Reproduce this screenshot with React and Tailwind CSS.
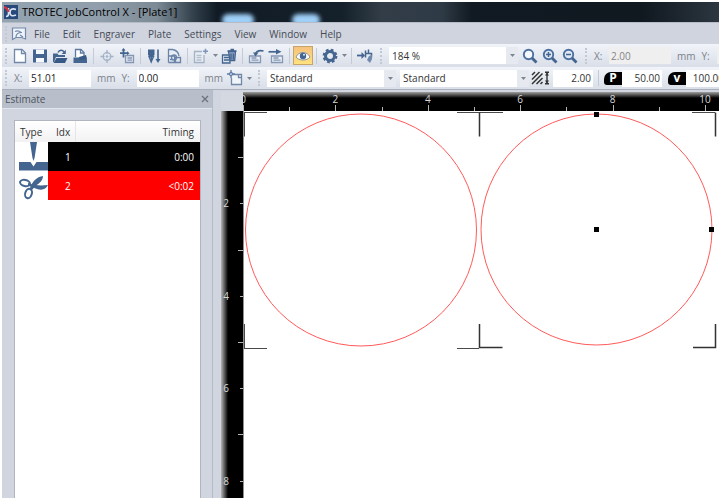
import React, { useEffect, useRef, useState } from 'react';

const MENU = ['File', 'Edit', 'Engraver', 'Plate', 'Settings', 'View', 'Window', 'Help'];
const UNIT = 46.2; // pixels per ruler unit at the current zoom
const BLUE = '#44658f';

const JOBS = [
  { idx: 1, timing: '0:00', row: 'bg-black', type: 'engrave' },
  { idx: 2, timing: '<0:02', row: 'bg-[#fe0000]', type: 'cut' },
];

function Icon({ children, className = 'w-4 h-4' }) {
  return (
    <svg viewBox="0 0 16 16" className={className} fill="none" stroke={BLUE} strokeWidth="1.3" aria-hidden="true">
      {children}
    </svg>
  );
}

const icons = {
  new: (
    <Icon>
      <path d="M2.5 1.5h7.5l3.5 3.5v9.5h-11z" fill="#fdfeff" stroke="#7288a8" />
      <path d="M9.5 1.5v4h4" stroke="#7288a8" />
    </Icon>
  ),
  save: (
    <Icon>
      <path d="M1 1.5h14v13H1z" fill={BLUE} stroke="none" />
      <path d="M4 1.5h8v4.500H4z" fill="#f6f9fc" stroke="none" />
      <path d="M4 10h8v4.500H4z" fill="#f6f9fc" stroke="none" />
    </Icon>
  ),
  open: (
    <Icon>
      <path d="M1 5.500h4.500l1 1.500H13v2H4l-2 5H1z" fill={BLUE} stroke="none" />
      <path d="M4.500 10H15.500l-2.500 5H1.500z" fill="#375985" stroke="none" />
      <path d="M6 4.500C7.500 1.500 10.500 1.500 12 4" strokeWidth="1.500" />
      <path d="M13.800 1.800v4.200H9.600z" fill={BLUE} stroke="none" />
    </Icon>
  ),
  print: (
    <Icon>
      <path d="M3.500 9V1.500h5.500L12 4.500V9" fill="#fdfeff" stroke="#5f7a9f" />
      <path d="M8.500 1.500v3.500H12" stroke="#5f7a9f" />
      <path d="M1.500 9.500h11l2.500 2v3.500h-13.500z" fill={BLUE} stroke="none" />
      <path d="M7 9l7-2 1 4-7 1z" fill="#375985" stroke="none" />
    </Icon>
  ),
  position: (
    <Icon>
      <circle cx="8" cy="8.500" r="3.800" stroke="#a2b2c9" />
      <circle cx="8" cy="8.500" r="1.300" fill="#a2b2c9" stroke="none" />
      <path d="M8 2v4M8 11v4M1.500 8.500h4M10.500 8.500h4" stroke="#a2b2c9" />
    </Icon>
  ),
  moveTo: (
    <Icon>
      <path d="M6.500 7.500h8v7h-8z" fill="#dfe6f0" stroke="#8597b3" />
      <path d="M8.500 10h4.500M8.500 12.200h4.500" stroke="#8597b3" />
      <path d="M4.500 1.500v8M1 5.200h8" strokeWidth="1.800" />
      <path d="M4.500 0l2 2.500h-4zM10.500 5.200L8 3.200v4z" fill={BLUE} stroke="none" />
    </Icon>
  ),
  engrave: (
    <Icon>
      <path d="M2 1.500h6.500v5l-1 1.500H3L2 6.500z" fill={BLUE} stroke="none" />
      <path d="M3 8.500h4.500L5.200 14z" fill="#f7f9fc" strokeWidth="1.400" />
      <path d="M5.200 8v4M12 1.500v11" strokeWidth="1.600" />
      <path d="M9.500 11h5L12 15z" fill={BLUE} stroke="none" />
    </Icon>
  ),
  estimate: (
    <Icon>
      <path d="M2.500 14.500v-13h4c4 .6 6 3 6.500 6.500" fill="#e9eef5" stroke="#6a84a9" />
      <path d="M2.500 8h6v6.500M4 11.500h3M2.500 14.500h12v-5h-5v5" stroke="#6a84a9" />
      <circle cx="8" cy="9.500" r="2.500" stroke="#6a84a9" />
    </Icon>
  ),
  addJob: (
    <Icon>
      <path d="M9 3.500H1.500v11h9.500V7" fill="#e9eef5" stroke="#a5b2c6" />
      <path d="M3.500 7.500h5M3.500 9.700h5M3.500 12h5" stroke="#b4bfd0" />
      <path d="M12.500.8v5M10 3.300h5" stroke="#7f97b9" strokeWidth="1.500" />
    </Icon>
  ),
  removeJob: (
    <Icon>
      <path d="M1.500 7h7.500v8H1.500z" fill="#dce4ef" />
      <path d="M3 9.500h5M3 12h5" />
      <path d="M7.500 3.500h7l-.8 9H9z" fill="#8ea5c5" />
      <path d="M6.500 3h9M9.500 1.500h3.500M10 5.500v6M12.300 5.500v6" strokeWidth="1.400" />
    </Icon>
  ),
  jobBack: (
    <Icon>
      <path d="M1.500 8h11v6.500h-11z" fill="#e9eef5" stroke="#8598b5" />
      <path d="M3.500 10h5M3.500 12.200h7" stroke="#8598b5" />
      <path d="M7.500 6C8.500 3 11 2 15.500 3" strokeWidth="1.700" />
      <path d="M5 4.500h5.500L7.500 8.500z" fill={BLUE} stroke="none" />
    </Icon>
  ),
  jobNext: (
    <Icon>
      <path d="M3.500 8h11v6.500h-11z" fill="#e9eef5" stroke="#8598b5" />
      <path d="M5.500 10h5M5.500 12.200h7" stroke="#8598b5" />
      <path d="M.5 3.800h8" strokeWidth="1.700" />
      <path d="M8 1l5.500 2.800L8 6.600z" fill={BLUE} stroke="none" />
    </Icon>
  ),
  preview: (
    <Icon>
      <path d="M1 9C3.500 3 12.500 3 15 9 12.500 13 3.500 13 1 9z" fill="#fdfdfb" stroke="#8d95a0" strokeWidth="1" />
      <circle cx="8" cy="8" r="3.200" fill={BLUE} stroke="none" />
      <circle cx="9" cy="6.800" r="1" fill="#dfe9f6" stroke="none" />
    </Icon>
  ),
  gear: (
    <Icon>
      <circle cx="8" cy="8" r="6.300" strokeWidth="2.200" strokeDasharray="2.700 2.250" />
      <circle cx="8" cy="8" r="4.500" strokeWidth="3" />
    </Icon>
  ),
  connect: (
    <Icon>
      <path d="M0 7.500h5.500" strokeWidth="1.800" />
      <path d="M4.500 4l3.500 3.500L4.500 11z" fill={BLUE} stroke="none" />
      <path d="M8.500 2.500v7M11.500 1.500v4M9 5.500h5.500v3c0 2-1 3-3 3" strokeWidth="1.500" />
      <path d="M12 8l3-1v4l-2 4-3-3z" fill="#7189ad" stroke="none" />
    </Icon>
  ),
  zoom: (
    <Icon>
      <circle cx="6.500" cy="6.500" r="4.700" fill="#f4f8fc" stroke="#4d70a1" strokeWidth="1.900" />
      <path d="M10 10l4.500 4.500" strokeWidth="2.800" />
    </Icon>
  ),
  zoomIn: (
    <Icon>
      <circle cx="6.500" cy="6.500" r="4.700" fill="#dfe8f3" stroke="#4d70a1" strokeWidth="1.900" />
      <path d="M10 10l4.500 4.500" strokeWidth="2.800" />
      <path d="M6.500 4v5M4 6.500h5" strokeWidth="1.500" />
    </Icon>
  ),
  zoomOut: (
    <Icon>
      <circle cx="6.500" cy="6.500" r="4.700" fill="#dfe8f3" stroke="#4d70a1" strokeWidth="1.900" />
      <path d="M10 10l4.500 4.500" strokeWidth="2.800" />
      <path d="M4 6.500h5" strokeWidth="1.500" />
    </Icon>
  ),
  anchor: (
    <Icon>
      <path d="M6 4.500h8.500v10H4.500V8" fill="#f1f4f9" stroke="#7288a8" />
      <path d="M11.500 4.500v3h3" stroke="#7288a8" />
      <path d="M4 0v8M0 4h8" stroke="#5f7ca6" />
      <circle cx="4" cy="4" r="1.500" fill="#f1f4f9" stroke="#5f7ca6" />
    </Icon>
  ),
};

function Grip() {
  return (
    <span className="w-2 shrink-0 flex justify-center">
      <span className="h-4 border-l-2 border-dotted border-[#c3c9d4]" />
    </span>
  );
}

function Separator() {
  return (
    <span className="w-[7px] shrink-0 flex justify-center">
      <span className="h-4 w-px bg-[#c4cad6]" />
    </span>
  );
}

function Tool({ icon, label, active }) {
  return (
    <button
      type="button"
      aria-label={label}
      className={
        active
          ? 'w-5 h-[19px] shrink-0 flex items-center justify-center border border-[#c8a469] bg-gradient-to-b from-[#f6c27c] to-[#ffe27d]'
          : 'w-5 h-5 shrink-0 flex items-center justify-center'
      }
    >
      {icons[icon]}
    </button>
  );
}

function Caret() {
  return (
    <svg viewBox="0 0 5 3" className="w-[5px] h-[3px]" aria-hidden="true">
      <path d="M0 0h5L2.500 3z" fill="#7d8593" />
    </svg>
  );
}

function MenuCaret({ label }) {
  return (
    <button type="button" aria-label={label} className="w-2 h-5 shrink-0 flex items-center justify-center">
      <Caret />
    </button>
  );
}

function Combo({ label, value }) {
  return (
    <div className="relative w-[129px] h-[17px] shrink-0">
      <select aria-label={label} defaultValue={value} className="appearance-none w-full h-full pl-[3px] bg-white text-[#333]">
        <option>{value}</option>
      </select>
      <span className="absolute right-0 inset-y-0 w-3 flex items-center justify-center bg-[#e6eaf0] pointer-events-none">
        <Caret />
      </span>
    </div>
  );
}

function Coordinate({ axis, value, disabled }) {
  return (
    <label className="flex items-center shrink-0 text-[#7c818b]">
      <span className="w-[15px]">{axis}:</span>
      <input
        defaultValue={value}
        disabled={disabled}
        className="w-[62px] h-[17px] px-0.5 bg-white text-[#222] disabled:bg-[#efeff0] disabled:text-[#858585]"
      />
      <span className="pl-1.5">mm</span>
    </label>
  );
}

function LaserField({ label, badge, value }) {
  return (
    <label className="flex items-center shrink-0">
      {badge}
      <input aria-label={label} defaultValue={value} className="w-10 h-[17px] px-0.5 text-right bg-white text-[#333]" />
    </label>
  );
}

function Badge({ children }) {
  return (
    <span className="w-[18px] h-[13px] flex items-center justify-center bg-black text-white text-xs leading-none font-bold rounded-tl-[7px] rounded-bl-[3px]">
      {children}
    </span>
  );
}

function HatchIcon() {
  return (
    <svg viewBox="0 0 20 14" className="w-5 h-3.5 mr-0.5" stroke="#333" fill="none" aria-hidden="true">
      <path d="M1 4l3-3M1 8.500l7.500-7.500M1 13L11.500 2.500M5.500 13l6-6M9.500 13l2-2" strokeWidth="1.500" />
      <path d="M16 2v10M14 1.200h4M14 12.800h4" strokeWidth="1.400" />
      <path d="M16 1.500l2 3h-4zM16 12.500l2-3h-4z" fill="#333" stroke="none" />
    </svg>
  );
}

function TitleBar() {
  return (
    <header className="h-5 shrink-0 relative overflow-hidden flex items-center gap-1 pl-0.5 text-[11px] text-black bg-[linear-gradient(90deg,#93a3b0_0px,#8f9eaa_100px,#7c8a95_155px,#35434e_190px,#101b25_215px,#14202a_340px,#323d48_380px,#2e3a45_440px,#111a22_470px,#101820_640px,#2c3741_719px)]">
      <span className="absolute left-[220px] -bottom-1 w-8 h-3 rounded-full bg-[#9fd0f8] blur-[2px]" />
      <span className="absolute left-[290px] -bottom-1 w-7 h-3 rounded-full bg-[#9fd0f8] blur-[2px]" />
      <svg viewBox="0 0 14 14" className="w-3.5 h-3.5 relative" fill="none" aria-hidden="true">
        <path d="M0 0h14v14H0z" fill="#28497c" />
        <path d="M4.500 3v6c0 2-1 2.500-2.500 2.500M12 4.500c-4-1.500-6 0-6 3s2 4 6 2.500" stroke="#dbe6f5" strokeWidth="1.600" />
        <path d="M0 2c2 .5 4 2.500 4.500 5" stroke="#d8343c" strokeWidth="2" />
      </svg>
      <h1 className="relative">TROTEC JobControl X - [Plate1]</h1>
    </header>
  );
}

function MenuBar() {
  return (
    <nav className="h-[22px] shrink-0 flex items-center bg-[#d0d4de] border-t border-[#b5bcc8] text-[#454b57]">
      <Grip />
      <svg viewBox="0 0 16 14" className="w-4 h-3.5 ml-px mr-[7px]" fill="none" stroke="#7289ab" strokeWidth="1.200" aria-hidden="true">
        <path d="M1.500 1h13v11l-4-1.500H5l-3.500 2z" fill="#eef3f9" />
        <path d="M4 4.500c2-1 4-1 6 1M5 10c0-3 2-4.500 6-4.500M9 8l3 2" />
      </svg>
      <ul className="flex gap-[13px]">
        {MENU.map((item) => (
          <li key={item}>
            <button type="button">{item}</button>
          </li>
        ))}
      </ul>
    </nav>
  );
}

function MainToolbar() {
  return (
    <div className="h-[23px] shrink-0 flex items-center overflow-hidden bg-gradient-to-b from-[#f1f4f9] to-[#d9dee8]">
      <Grip />
      <Tool icon="new" label="New" />
      <Tool icon="save" label="Save" />
      <Tool icon="open" label="Open" />
      <Tool icon="print" label="Print" />
      <Separator />
      <Tool icon="position" label="Position" />
      <Tool icon="moveTo" label="Move to" />
      <Separator />
      <Tool icon="engrave" label="Engrave" />
      <Tool icon="estimate" label="Estimate" />
      <Separator />
      <Tool icon="addJob" label="Add job" />
      <MenuCaret label="Add job options" />
      <Tool icon="removeJob" label="Remove job" />
      <Separator />
      <Tool icon="jobBack" label="Previous job" />
      <Tool icon="jobNext" label="Next job" />
      <Separator />
      <Tool icon="preview" label="Preview" active />
      <Separator />
      <Tool icon="gear" label="Settings" />
      <MenuCaret label="Settings options" />
      <Separator />
      <Tool icon="connect" label="Connect" />
      <div className="flex items-center gap-1 pl-0.5 shrink-0">
        <Grip />
        <Combo label="Zoom" value="184 %" />
      </div>
      <div className="flex items-center px-0.5 shrink-0">
        <Tool icon="zoom" label="Zoom" />
        <Tool icon="zoomIn" label="Zoom in" />
        <Tool icon="zoomOut" label="Zoom out" />
      </div>
      <Grip />
      <div className="flex items-center gap-1.5 pl-1 shrink-0">
        <Coordinate axis="X" value="2.00" disabled />
        <Coordinate axis="Y" value="2.00" disabled />
      </div>
    </div>
  );
}

function PositionToolbar() {
  return (
    <div className="h-[22px] shrink-0 flex items-center overflow-hidden bg-gradient-to-b from-[#f1f4f9] to-[#d9dee8]">
      <Grip />
      <div className="flex items-center gap-1.5 pl-1 pr-0.5 shrink-0">
        <Coordinate axis="X" value="51.01" />
        <Coordinate axis="Y" value="0.00" />
      </div>
      <Tool icon="anchor" label="Anchor" />
      <MenuCaret label="Anchor options" />
      <div className="flex items-center gap-1 pl-0.5 shrink-0">
        <Grip />
        <Combo label="Material group" value="Standard" />
        <Combo label="Material" value="Standard" />
      </div>
      <div className="flex items-center gap-0.5 pl-0.5 shrink-0">
        <LaserField label="Thickness" badge={<HatchIcon />} value="2.00" />
        <Separator />
        <LaserField label="Power" badge={<Badge>P</Badge>} value="50.00" />
        <span className="w-0.5" />
        <LaserField label="Velocity" badge={<Badge>v</Badge>} value="100.00" />
      </div>
    </div>
  );
}

function JobIcon({ type }) {
  if (type === 'engrave') {
    return (
      <svg viewBox="0 0 29 29" className="w-[29px] h-[29px]" fill={BLUE} aria-hidden="true">
        <path d="M11 0h7l-2.500 16L14.500 19l-1-3z" />
        <path d="M0 20h11.500l3 4.500 3-4.500H29v8.500H0z" />
      </svg>
    );
  }
  return (
    <svg viewBox="0 0 29 29" className="w-[29px] h-[29px]" fill="none" stroke={BLUE} strokeWidth="2" aria-hidden="true">
      <ellipse cx="6" cy="12" rx="5" ry="3" transform="rotate(14 6 12)" />
      <ellipse cx="9.500" cy="22.500" rx="3.300" ry="4.800" transform="rotate(18 9.500 22.500)" />
      <path d="M10.500 18.500C13 11 17 6 24 5c0 4-3 7-7.500 10l-4 4.500z" fill={BLUE} stroke="none" />
      <path d="M9 12c6 2.500 12 3 20 2-2 4.500-6 5.500-11 4l-9-3.500z" fill={BLUE} stroke="none" />
    </svg>
  );
}

function EstimatePanel() {
  return (
    <aside className="w-[211px] shrink-0 flex flex-col bg-[#d0d5df] border-r border-[#b4bbc7]">
      <div className="h-[19px] flex items-center justify-between pl-[3px] pr-0.5 bg-[#b8bfcb] text-[#4e535c] border-b border-[#dfe5ed]">
        <h2>Estimate</h2>
        <button type="button" aria-label="Close" className="w-2.5 h-2.5">
          <svg viewBox="0 0 10 10" className="w-full h-full" stroke="#6b717c" strokeWidth="1.200" aria-hidden="true">
            <path d="M2 2l6 6M8 2L2 8" />
          </svg>
        </button>
      </div>
      <div className="flex-1 mt-[11px] ml-3 mr-[11px] bg-white border-t border-x border-[#b0b5bf]">
        <table className="w-full table-fixed border-separate border-spacing-0">
          <thead className="bg-gradient-to-b from-white to-[#f2f2f3] text-[#333]">
            <tr className="h-[21px]">
              <th className="w-[33px] p-0 pl-[5px] text-left font-normal">Type</th>
              <th className="w-7 p-0 pl-2 text-left font-normal border-r border-[#e6e6e8]">Idx</th>
              <th className="p-0 pr-1.5 text-right font-normal">Timing</th>
            </tr>
          </thead>
          <tbody className="text-white">
            {JOBS.map((job) => (
              <tr key={job.idx} className="h-[29px]">
                <td className="p-0 pl-1 bg-white"><JobIcon type={job.type} /></td>
                <td className={`p-0 pl-[17px] ${job.row}`}>{job.idx}</td>
                <td className={`p-0 pr-1.5 text-right ${job.row}`}>{job.timing}</td>
              </tr>
            ))}
          </tbody>
        </table>
      </div>
    </aside>
  );
}

// Returns as many unit marks as fit along the ruler
function useMarks(axis) {
  const ref = useRef(null);
  const [count, setCount] = useState(0);

  useEffect(() => {
    function measure() {
      const size = axis === 'x' ? ref.current.clientWidth : ref.current.clientHeight;
      setCount(Math.floor((size - 8) / UNIT) + 1);
    }

    measure();
    window.addEventListener('resize', measure);
    return () => window.removeEventListener('resize', measure);
  }, [axis]);

  return [ref, Array.from({ length: count }, (_, i) => i)];
}

function TopRuler() {
  const [ref, marks] = useMarks('x');

  return (
    <div ref={ref} className="h-[19px] flex-1 min-w-0 bg-[linear-gradient(#a0a0a0,#000_6px)]">
      <svg className="w-full h-full" fontSize="10" fill="#d8d8d8" stroke="none" aria-hidden="true">
        {marks.map((n) => (
          <g key={n}>
            <rect x={Math.round(n * UNIT)} y={n % 2 ? 15 : 13} width="1" height="6" fill="#b5b5b5" />
            {n % 2 === 0 && <text x={n * UNIT} y="11" textAnchor="middle">{n}</text>}
          </g>
        ))}
      </svg>
    </div>
  );
}

function SideRuler() {
  const [ref, marks] = useMarks('y');

  return (
    <div ref={ref} className="w-[22px] shrink-0 bg-[linear-gradient(90deg,#b5b5b8,#000_7px)]">
      <svg className="w-full h-full" fontSize="10" fill="#d8d8d8" stroke="none" aria-hidden="true">
        {marks.slice(1).map((n) => (
          <g key={n}>
            <rect x={n % 2 ? 17 : 19} y={Math.round(n * UNIT)} width="5" height="1" fill="#b5b5b5" />
            {n % 2 === 0 && <text x="5" y={n * UNIT + 4} textAnchor="middle">{n}</text>}
          </g>
        ))}
      </svg>
    </div>
  );
}

function Plate() {
  return (
    <div className="flex-1 min-w-0 bg-white border-l border-[#8f8f8f]">
      <svg className="w-full h-full" fill="none" aria-label="Plate">
        <g stroke="#ff5a5a" strokeWidth="1">
          <ellipse cx="117" cy="119" rx="115.500" ry="116" />
          <ellipse cx="352.500" cy="118.500" rx="115.500" ry="115.500" />
        </g>
        <g stroke="#4a4a4a">
          <path d="M0 1.500h23M.5 1.500v24M0 237.500h23M.5 213v24" />
          <path d="M213 1.500h46M213 237.500h22M448 1.500h23" />
        </g>
        <g stroke="#333" strokeWidth="1.500">
          <path d="M235.500 1.500v24M235.500 213v23.500h23M471.500 1.500v24M471.500 213v23.500H449" />
        </g>
        <g fill="#000">
          <rect x="350" y="1" width="5" height="5" />
          <rect x="350" y="116" width="5" height="5" />
          <rect x="465" y="116" width="5" height="5" />
        </g>
      </svg>
    </div>
  );
}

export default function App() {
  return (
    <div className="h-screen flex flex-col overflow-hidden bg-white pt-0.5 pl-0.5 pb-[3px] text-[10px] leading-4 font-['Open_Sans','Noto_Sans',sans-serif]">
      <TitleBar />
      <MenuBar />
      <MainToolbar />
      <PositionToolbar />
      <main className="flex-1 min-h-0 flex bg-[#d0d5df] border-t border-[#aab0bb]">
        <EstimatePanel />
        <section className="flex-1 min-w-0 flex flex-col pl-2" aria-label="Workspace">
          <div className="flex pt-0.5">
            <div className="w-[22px] shrink-0 bg-[#d3d8e1]" />
            <TopRuler />
          </div>
          <div className="flex-1 min-h-0 flex">
            <SideRuler />
            <Plate />
          </div>
        </section>
      </main>
    </div>
  );
}
